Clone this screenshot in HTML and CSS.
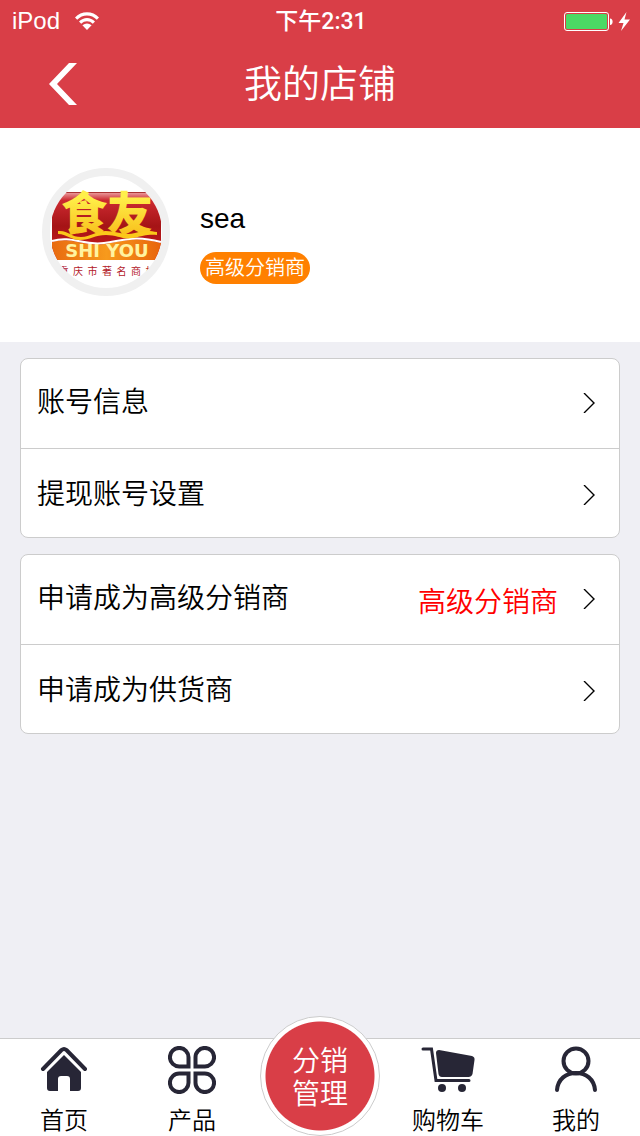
FILE: index.html
```html
<!DOCTYPE html>
<html lang="zh-CN">
<head>
  <meta charset="UTF-8" />
  <meta name="viewport" content="width=device-width, initial-scale=1.0"/>
  <title>我的店铺</title>
  <link rel="stylesheet" href="styles.css">
</head>
<body>
  <!-- Status bar -->
  <div class="status">
    <div class="carrier">
      <span>iPod</span>
      <svg width="26" height="20" viewBox="0 0 26 20" aria-hidden="true" fill="#fff">
        <path d="M1 6.500C7-.5 19-.5 25 6.500L22.800 8.700C17.500 3 8.500 3 3.200 8.700z"/>
        <path d="M5 10.500c4.500-4.700 11.500-4.700 16 0l-2.200 2.200c-3.300-3.300-8.300-3.300-11.600 0z"/>
        <path d="M13 19l-4.600-4.700q4.600-3.600 9.200 0z"/>
      </svg>
    </div>
    <span class="time">下午2:31</span>
    <div class="power">
      <svg width="66" height="20" viewBox="0 0 66 20" aria-hidden="true">
        <rect x=".5" y="1.5" width="44" height="18" rx="2.5" fill="none" stroke="#fff"/>
        <rect x="2" y="3" width="41" height="15" rx="1.5" fill="#4cd964"/>
        <path d="M46 7.500c3.500 0 3.500 6.500 0 6.500z" fill="#fff"/>
        <path d="M62.500 1L54.500 12h5l-2.500 8 9-11.500h-5.500z" fill="#fff"/>
      </svg>
    </div>
  </div>

  <header>
    <button class="back" aria-label="返回">
      <svg width="28" height="42" viewBox="0 0 28 42"><path d="M20 0h8L8 21l20 21h-8L0 21z" fill="#fff"/></svg>
    </button>
    <h1>我的店铺</h1>
  </header>

  <section class="profile">
    <div class="avatar">
      <svg viewBox="0 0 112 112" role="img" aria-label="食友 SHI YOU">
        <defs>
          <linearGradient id="red" x1="0" y1="0" x2="0" y2="1">
            <stop offset="0" stop-color="#eda5a5"/>
            <stop offset=".12" stop-color="#cc2a31"/>
            <stop offset=".5" stop-color="#a51416"/>
            <stop offset="1" stop-color="#cf1a1e"/>
          </linearGradient>
          <linearGradient id="gold" x1="0" y1="0" x2="0" y2="1">
            <stop offset=".3" stop-color="#fff04a"/>
            <stop offset="1" stop-color="#f7b512"/>
          </linearGradient>
          <linearGradient id="orange" x1="0" y1="0" x2="1" y2="0">
            <stop offset="0" stop-color="#e86a10"/>
            <stop offset=".5" stop-color="#f79a1c"/>
            <stop offset="1" stop-color="#e8640c"/>
          </linearGradient>
        </defs>
        <path d="M2 16h109v68H2z" fill="url(#red)"/>
        <path d="M2 16h109v1H2z" fill="#a33"/>
        <path d="M2 66c20-6 31 5 52 2s31-8 57-1v17H2z" fill="url(#orange)"/>
        <path d="M2 65c20-6 31 5 52 2s31-8 57-1" fill="none" stroke="#fff" stroke-width="2"/>
        <text class="logo-cn" x="57" y="54" text-anchor="middle" fill="url(#gold)">食友</text>
        <path d="M8 55c10-1 13 6 23 6s14-6 25-6 18 5 29 2 15-2 22-1v3c-9-1-14 1-24 3s-16-3-27-3-16 5-26 5-13-6-22-6z" fill="#fbc81a"/>
        <text class="logo-en" x="57" y="81" text-anchor="middle">SHI YOU</text>
        <text class="logo-sub" x="57" y="99" text-anchor="middle">重  庆  市  著  名  商  标</text>
      </svg>
    </div>
    <div class="who">
      <h2>sea</h2>
      <span class="badge">高级分销商</span>
    </div>
  </section>

  <main>
    <nav class="card">
      <a href="#account"><span>账号信息</span><svg class="arrow" viewBox="0 0 12 20"><path d="M1 0l10 10L1 20"/></svg></a>
      <a href="#withdraw"><span>提现账号设置</span><svg class="arrow" viewBox="0 0 12 20"><path d="M1 0l10 10L1 20"/></svg></a>
    </nav>
    <nav class="card">
      <a href="#senior"><span>申请成为高级分销商</span><em>高级分销商</em><svg class="arrow" viewBox="0 0 12 20"><path d="M1 0l10 10L1 20"/></svg></a>
      <a href="#supplier"><span>申请成为供货商</span><svg class="arrow" viewBox="0 0 12 20"><path d="M1 0l10 10L1 20"/></svg></a>
    </nav>
  </main>

  <!-- Bottom tabs -->
  <footer>
    <a href="#home">
      <svg width="48" height="48" viewBox="0 0 48 48">
        <path d="M3 23L21.500 4q2.500-2 5 0L45 23" fill="none" stroke="#272636" stroke-width="4" stroke-linecap="round"/>
        <path d="M24 9l17 17v16q0 3-3 3h-8V33q0-3-3-3h-6q-3 0-3 3v12h-8q-3 0-3-3V26z" fill="#272636"/>
      </svg>
      <span>首页</span>
    </a>
    <a href="#products">
      <svg width="48" height="48" viewBox="0 0 48 48" fill="none" stroke="#272636" stroke-width="4">
        <path d="M20.500 20.500h-9a9.300 9.300 0 1 1 9-9z"/>
        <path d="M27.500 20.500h9a9.300 9.300 0 1 0-9-9z"/>
        <path d="M20.500 27.500h-9a9.300 9.300 0 1 0 9 9z"/>
        <path d="M27.500 27.500h9a9.300 9.300 0 1 1-9 9z"/>
      </svg>
      <span>产品</span>
    </a>
    <div class="middle"><a class="round" href="#manage">分销<br>管理</a></div>
    <a href="#cart">
      <svg width="54" height="48" viewBox="0 0 54 48" fill="#272636">
        <path d="M2 3h8.500L15 34.500h33" fill="none" stroke="#272636" stroke-width="3" stroke-linecap="round"/>
        <path d="M15 7q0-3 3-3l33 6q3 1 2.500 4l-2 14q-1 3-4 3H21q-3 0-3.500-3z"/>
        <circle cx="21" cy="42" r="4"/><circle cx="41" cy="42" r="4"/>
      </svg>
      <span>购物车</span>
    </a>
    <a href="#me">
      <svg width="48" height="48" viewBox="0 0 48 48" fill="none" stroke="#272636" stroke-width="4" stroke-linecap="round">
        <circle cx="24" cy="15" r="12.500"/>
        <path d="M5 44c1-11 9-17 19-17s18 6 19 17"/>
      </svg>
      <span>我的</span>
    </a>
  </footer>
</body>
</html>
```
FILE: styles.css
```css
* { box-sizing: border-box; margin: 0; padding: 0; }
body {
  font-family: 'Liberation Sans', 'Noto Sans CJK SC', sans-serif;
  font-weight: 350; background: #efeff4; color: #000;
  min-height: 100vh; display: flex; flex-direction: column;
}
a { color: inherit; text-decoration: none; }
svg { display: block; }

.status {
  display: grid; grid-template-columns: 1fr auto 1fr; align-items: center;
  height: 40px; padding: 0 10px 0 12px;
  background: #d93e47; color: #fff; font-size: 24px; line-height: 40px;
}
.carrier { display: flex; align-items: center; gap: 14px; }
.time { padding-top: 2px; font-family: Roboto, 'Noto Sans CJK SC', sans-serif; font-size: 23px; font-weight: 500; }
.power { display: flex; justify-content: flex-end; }

header {
  display: grid; grid-template-columns: 80px 1fr 80px; align-items: center;
  height: 88px; background: #d93e47; color: #fff;
}
.back { background: none; border: none; padding-left: 49px; cursor: pointer; }
header h1 { font-size: 38px; line-height: 88px; font-weight: 350; text-align: center; }

.profile {
  display: flex; gap: 30px; padding: 40px 42px 46px; background: #fff;
}
.avatar {
  width: 128px; height: 128px; border: 8px solid #f0f0f0;
  border-radius: 50%; overflow: hidden;
}
.logo-cn { font: 900 46px 'Noto Sans CJK SC', sans-serif; }
.logo-en { font: 900 18px 'DejaVu Sans', sans-serif; fill: #fff3a0; }
.logo-sub { font: 400 10px 'Noto Sans CJK SC', sans-serif; fill: #b3202a; white-space: pre; }
.who { display: flex; flex-direction: column; align-items: flex-start; gap: 16px; padding-top: 34px; }
.who h2 { font-size: 28px; line-height: 34px; font-weight: 400; }
.badge {
  padding: 1px 5px 0; border-radius: 16px; background: #ff8000;
  color: #fff; font-size: 20px; line-height: 31px;
}

main { flex: 1; display: flex; flex-direction: column; gap: 16px; padding: 16px 20px; }
.card { background: #fff; border: 1px solid #ccc; border-radius: 8px; }
.card a {
  display: flex; align-items: center; gap: 25px;
  height: 89px; padding: 0 24px 2px 16px; font-size: 28px; line-height: 40px;
}
.card a + a { padding-top: 6px; border-top: 1px solid #ccc; }
.card span { flex: 1; }
.card em { padding-top: 8px; font-style: normal; color: #f00; }
.arrow { width: 12px; height: 20px; fill: none; stroke: #000; stroke-width: 1.4; }

footer {
  display: grid; grid-template-columns: repeat(5, 1fr); grid-template-rows: 97px;
  position: sticky; bottom: 0;
  background: #fff; border-top: 1px solid #ccc; font-size: 24px;
}
footer > a { display: flex; flex-direction: column; align-items: center; gap: 12px; padding-top: 7px; line-height: 30px; }
.middle { display: flex; justify-content: center; align-items: flex-end; }
.round {
  flex: none; width: 120px; height: 120px; padding-top: 28px;
  border: 1px solid #ccc; border-radius: 50%;
  background: radial-gradient(circle, #d93e47 54px, #fff 55px);
  color: #fff; font-size: 28px; line-height: 33px; text-align: center;
}
```
